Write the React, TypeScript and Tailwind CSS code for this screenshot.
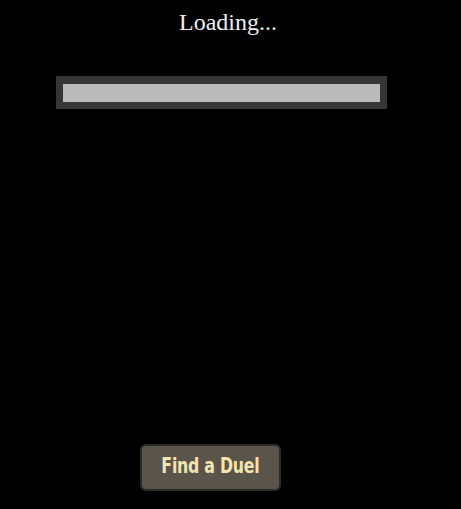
export default function App() {
  return (
    <div className="w-[461px] h-[509px] bg-black flex flex-col overflow-hidden">
      <h1 className="self-start ml-[179px] mt-[7px] text-[24px] leading-[30px] text-[#eeeeee] font-['Liberation_Serif',serif]">
        Loading...
      </h1>

      {/* progress bar */}
      <div className="self-start ml-[56px] mt-[39px] w-[331px] h-[33px] bg-[#363636] pt-[8px] pb-[7px] px-[7px]">
        <div className="w-full h-full bg-[#bbbbbb]" />
      </div>

      <div className="flex-1" />

      <button className="self-start ml-[140px] mb-[18px] w-[141px] h-[47px] rounded-[6px] border-2 border-[#2b2a27] bg-[#59554b] flex items-center justify-center">
        <span className="inline-block -mt-[2px] scale-x-[0.75] text-[#f5e4ae] text-[21px] font-bold tracking-[-0.3px] font-['DejaVu_Sans',sans-serif]">
          Find a Duel
        </span>
      </button>
    </div>
  );
}
